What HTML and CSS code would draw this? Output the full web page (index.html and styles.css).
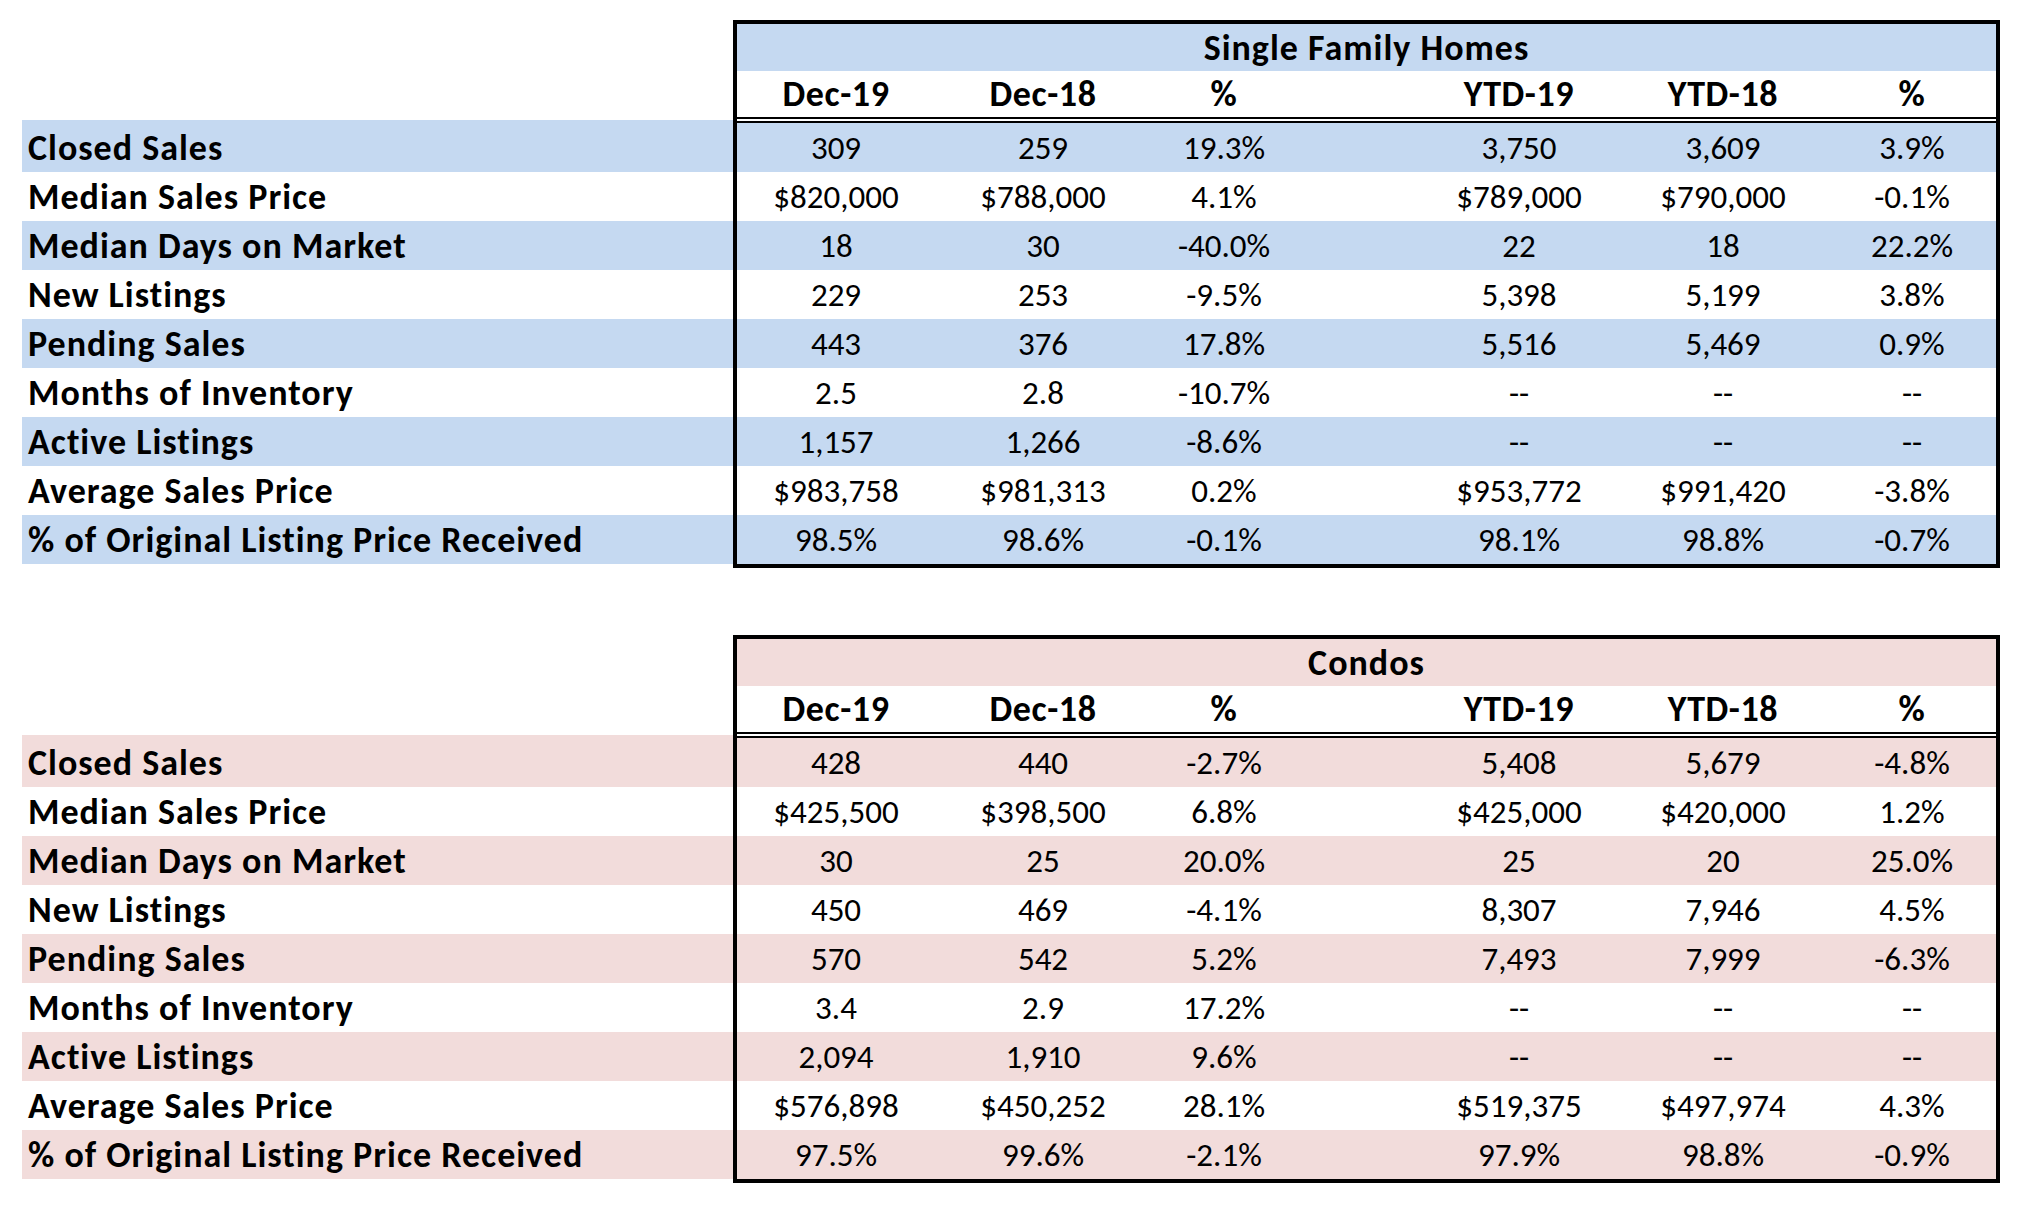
FILE: index.html
```html
<!DOCTYPE html>
<html>
<head>
<meta charset="utf-8">
<link rel="stylesheet" href="styles.css">
</head>
<body>
<section class="block blue">
  <div class="labels">
    <div class="lab first">Closed Sales</div>
    <div class="lab">Median Sales Price</div>
    <div class="lab">Median Days on Market</div>
    <div class="lab">New Listings</div>
    <div class="lab">Pending Sales</div>
    <div class="lab">Months of Inventory</div>
    <div class="lab">Active Listings</div>
    <div class="lab">Average Sales Price</div>
    <div class="lab">% of Original Listing Price Received</div>
  </div>
  <div class="box">
    <div class="title">Single Family Homes</div>
    <div class="row head"><span>Dec-19</span><span>Dec-18</span><span>%</span><span></span><span>YTD-19</span><span>YTD-18</span><span>%</span></div>
    <div class="row"><span>309</span><span>259</span><span>19.3%</span><span></span><span>3,750</span><span>3,609</span><span>3.9%</span></div>
    <div class="row"><span>$820,000</span><span>$788,000</span><span>4.1%</span><span></span><span>$789,000</span><span>$790,000</span><span>-0.1%</span></div>
    <div class="row"><span>18</span><span>30</span><span>-40.0%</span><span></span><span>22</span><span>18</span><span>22.2%</span></div>
    <div class="row"><span>229</span><span>253</span><span>-9.5%</span><span></span><span>5,398</span><span>5,199</span><span>3.8%</span></div>
    <div class="row"><span>443</span><span>376</span><span>17.8%</span><span></span><span>5,516</span><span>5,469</span><span>0.9%</span></div>
    <div class="row"><span>2.5</span><span>2.8</span><span>-10.7%</span><span></span><span>--</span><span>--</span><span>--</span></div>
    <div class="row"><span>1,157</span><span>1,266</span><span>-8.6%</span><span></span><span>--</span><span>--</span><span>--</span></div>
    <div class="row"><span>$983,758</span><span>$981,313</span><span>0.2%</span><span></span><span>$953,772</span><span>$991,420</span><span>-3.8%</span></div>
    <div class="row"><span>98.5%</span><span>98.6%</span><span>-0.1%</span><span></span><span>98.1%</span><span>98.8%</span><span>-0.7%</span></div>
  </div>
</section>
<section class="block pink">
  <div class="labels">
    <div class="lab first">Closed Sales</div>
    <div class="lab">Median Sales Price</div>
    <div class="lab">Median Days on Market</div>
    <div class="lab">New Listings</div>
    <div class="lab">Pending Sales</div>
    <div class="lab">Months of Inventory</div>
    <div class="lab">Active Listings</div>
    <div class="lab">Average Sales Price</div>
    <div class="lab">% of Original Listing Price Received</div>
  </div>
  <div class="box">
    <div class="title">Condos</div>
    <div class="row head"><span>Dec-19</span><span>Dec-18</span><span>%</span><span></span><span>YTD-19</span><span>YTD-18</span><span>%</span></div>
    <div class="row"><span>428</span><span>440</span><span>-2.7%</span><span></span><span>5,408</span><span>5,679</span><span>-4.8%</span></div>
    <div class="row"><span>$425,500</span><span>$398,500</span><span>6.8%</span><span></span><span>$425,000</span><span>$420,000</span><span>1.2%</span></div>
    <div class="row"><span>30</span><span>25</span><span>20.0%</span><span></span><span>25</span><span>20</span><span>25.0%</span></div>
    <div class="row"><span>450</span><span>469</span><span>-4.1%</span><span></span><span>8,307</span><span>7,946</span><span>4.5%</span></div>
    <div class="row"><span>570</span><span>542</span><span>5.2%</span><span></span><span>7,493</span><span>7,999</span><span>-6.3%</span></div>
    <div class="row"><span>3.4</span><span>2.9</span><span>17.2%</span><span></span><span>--</span><span>--</span><span>--</span></div>
    <div class="row"><span>2,094</span><span>1,910</span><span>9.6%</span><span></span><span>--</span><span>--</span><span>--</span></div>
    <div class="row"><span>$576,898</span><span>$450,252</span><span>28.1%</span><span></span><span>$519,375</span><span>$497,974</span><span>4.3%</span></div>
    <div class="row"><span>97.5%</span><span>99.6%</span><span>-2.1%</span><span></span><span>97.9%</span><span>98.8%</span><span>-0.9%</span></div>
  </div>
</section>
</body>
</html>
```
FILE: styles.css
```css
html, body {
  margin: 0;
  padding: 0;
  background: #ffffff;
}
body {
  font-family: Carlito, Calibri, Lato, sans-serif;
  font-size: 33px;
  color: #000;
  width: 2024px;
  height: 1206px;
  overflow: hidden;
}
.block {
  display: flex;
  margin-left: 22px;
  margin-top: 20px;
}
.block + .block {
  margin-top: 67px;
}
.labels {
  width: 711px;
  padding-top: 100px;
  display: flex;
  flex-direction: column;
}
.lab {
  height: 49px;
  display: flex;
  align-items: center;
  padding-left: 6px;
  font-weight: bold;
  font-size: 36px;
  letter-spacing: 1px;
}
.lab.first {
  height: 52px;
  padding-top: 4px;
  box-sizing: border-box;
}
.blue .lab:nth-child(odd) { background: #c5d9f1; }
.pink .lab:nth-child(odd) { background: #f2dcdb; }
.box {
  width: 1267px;
  box-sizing: border-box;
  border: 4px solid #000;
}
.title {
  height: 47px;
  display: flex;
  align-items: center;
  justify-content: center;
  font-weight: bold;
  font-size: 36px;
  letter-spacing: 1px;
}
.blue .title { background: #c5d9f1; }
.pink .title { background: #f2dcdb; }
.row {
  display: grid;
  grid-template-columns: 198px 216px 146px 123px 198px 210px 168px;
  height: 49px;
  align-items: center;
}
.row span {
  text-align: center;
}
.row.head {
  height: 46px;
  font-weight: bold;
  font-size: 36px;
  letter-spacing: 0.6px;
  border-bottom: 6px double #000;
}
.blue .row:nth-child(odd) { background: #c5d9f1; }
.pink .row:nth-child(odd) { background: #f2dcdb; }
.blue .row.head, .pink .row.head { background: #ffffff; }
```
